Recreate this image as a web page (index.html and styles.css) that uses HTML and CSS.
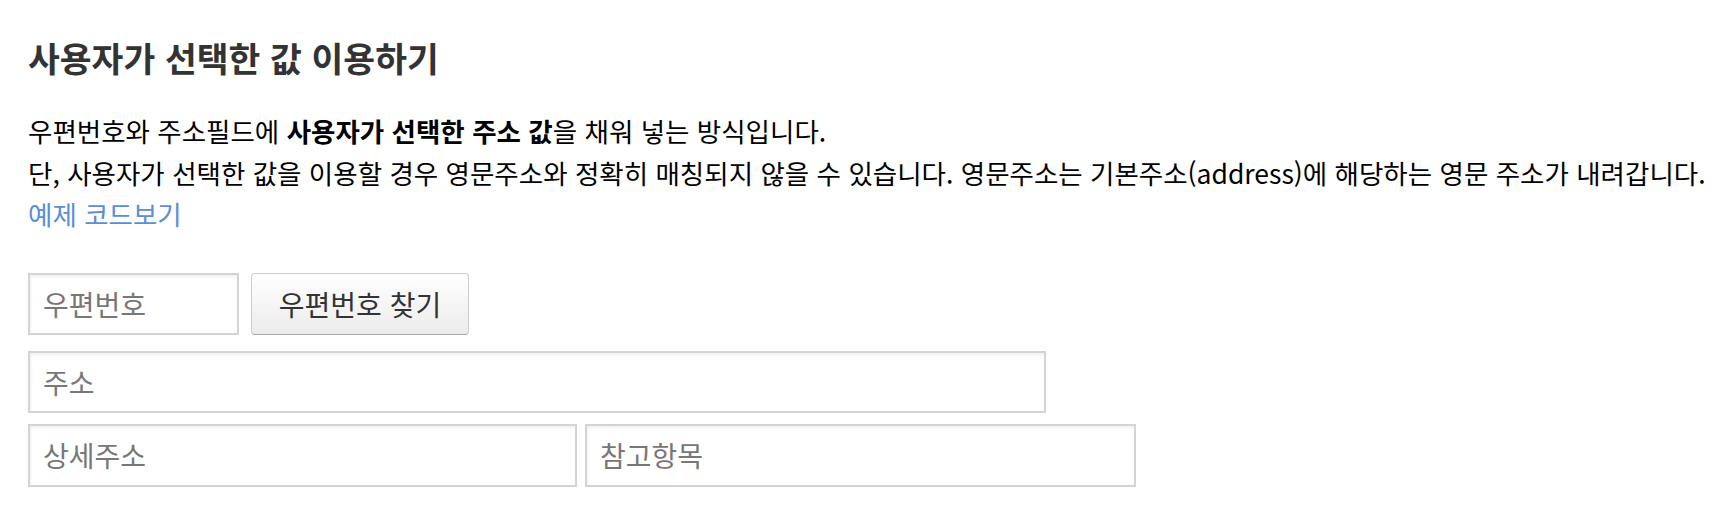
FILE: index.html
```html
<!DOCTYPE html>
<html lang="ko">
<head>
  <meta charset="UTF-8" />
  <meta name="viewport" content="width=device-width, initial-scale=1.0"/>
  <title>사용자가 선택한 값 이용하기</title>
  <link rel="stylesheet" href="styles.css">
</head>
<body>
  <div class="guide">
    <h2 class="guide-title">사용자가 선택한 값 이용하기</h2>
    <p class="guide-desc">
      우편번호와 주소필드에 <b>사용자가 선택한 주소 값</b>을 채워 넣는 방식입니다.<br>
      단, 사용자가 선택한 값을 이용할 경우 영문주소와 정확히 매칭되지 않을 수 있습니다. 영문주소는 기본주소(address)에 해당하는 영문 주소가 내려갑니다.<br>
      <a href="#" class="code-link">예제 코드보기</a>
    </p>

    <div class="form">
      <div class="row row-post">
        <input type="text" class="field field-post" placeholder="우편번호" />
        <input type="button" class="btn-find" value="우편번호 찾기" />
      </div>
      <div class="row row-addr">
        <input type="text" class="field field-addr" placeholder="주소" />
      </div>
      <div class="row row-detail">
        <input type="text" class="field field-detail" placeholder="상세주소" />
        <input type="text" class="field field-extra" placeholder="참고항목" />
      </div>
    </div>
  </div>
</body>
</html>
```

FILE: styles.css
```css
* {
  box-sizing: border-box;
}
body {
  margin: 0;
  background: #fff;
  color: #000;
  font-family: "Noto Sans CJK KR", "Noto Sans", sans-serif;
}
.guide {
  padding: 0 0 0 28px;
}
.guide-title {
  margin: 36px 0 0;
  font-size: 34.6px;
  line-height: 42px;
  font-weight: bold;
  color: #333;
}
.guide-desc {
  margin: 32px 0 0;
  font-size: 26.5px;
  line-height: 41.5px;
  color: #000;
  white-space: nowrap;
}
.guide-desc b {
  font-weight: bold;
}
.code-link {
  color: #5a8ed8;
  text-decoration: none;
}
.form {
  margin-top: 38px;
}
.row {
  display: flex;
}
.row-post {
  gap: 12px;
}
.row-addr {
  margin-top: 16px;
}
.row-detail {
  margin-top: 11px;
  gap: 8px;
}
.field {
  height: 62px;
  padding: 0 13px;
  border: 2px solid #d4d4d4;
  box-shadow: inset 1px 2px 3px rgba(0, 0, 0, 0.06);
  background: #fff;
  font-family: inherit;
  font-size: 28px;
  color: #333;
  outline: none;
}
.field::placeholder {
  color: #777;
}
.field-post {
  width: 211px;
}
.field-addr {
  width: 1018px;
}
.field-detail {
  width: 549px;
}
.field-extra {
  width: 551px;
  height: 63px;
}
.row-detail .field-detail {
  height: 63px;
}
.btn-find {
  width: 218px;
  height: 62px;
  padding: 0;
  border: 1px solid #ccc;
  border-bottom-color: #aaa;
  border-radius: 4px;
  background: linear-gradient(#fff, #ececec);
  font-family: inherit;
  font-size: 28px;
  color: #333;
}
```
